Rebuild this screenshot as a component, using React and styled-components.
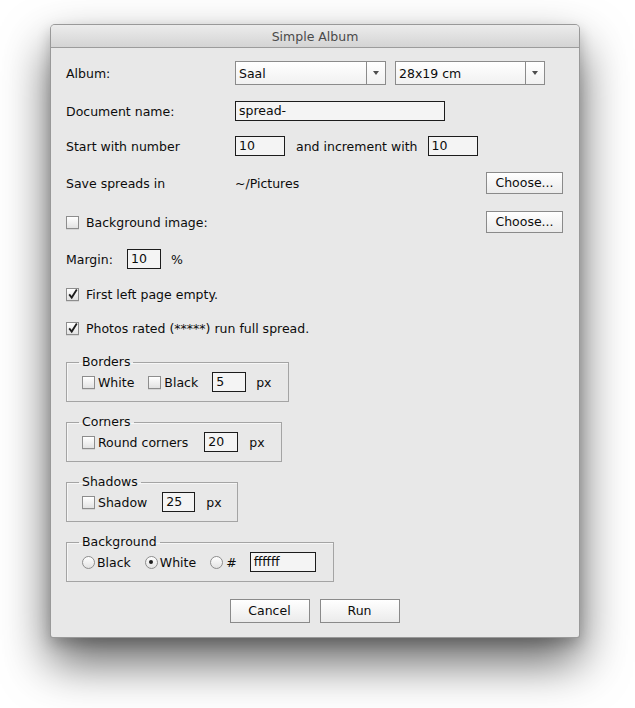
import React from "react";
import styled, { createGlobalStyle } from "styled-components";

const GlobalStyle = createGlobalStyle`
  html, body {
    margin: 0;
    padding: 0;
    background: #ffffff;
  }
  body {
    font-family: "DejaVu Sans", "Noto Sans", sans-serif;
    font-size: 12.5px;
    color: #0c0c0c;
  }
`;

const Desktop = styled.div`
  padding: 24px 55px 71px 50px;
`;

const Window = styled.div`
  width: 530px;
  height: 614px;
  box-sizing: border-box;
  display: flex;
  flex-direction: column;
  background: #e8e8e8;
  border: 1px solid rgba(0, 0, 0, 0.34);
  border-radius: 5px 5px 3px 3px;
  box-shadow: 0 24px 48px rgba(0, 0, 0, 0.62), 0 6px 14px rgba(0, 0, 0, 0.18);
  overflow: hidden;
`;

const TitleBar = styled.div`
  height: 22px;
  flex-shrink: 0;
  display: flex;
  align-items: center;
  justify-content: center;
  background: linear-gradient(#ececec, #d4d4d4);
  border-bottom: 1px solid #9c9c9c;
  color: #4a4a4a;
  font-size: 12.5px;
`;

const Body = styled.div`
  display: flex;
  flex-direction: column;
  padding: 0 16px 0 15px;
`;

const Row = styled.div`
  display: flex;
  align-items: center;
  height: ${(p) => p.$h}px;
  margin-top: ${(p) => p.$top}px;
  justify-content: ${(p) => (p.$center ? "center" : "flex-start")};
  gap: ${(p) => p.$gap || 0}px;
`;

const Label = styled.span`
  width: ${(p) => p.$w || 169}px;
  flex-shrink: 0;
  white-space: nowrap;
`;

const Text = styled.span`
  white-space: nowrap;
  margin-left: ${(p) => p.$ml || 0}px;
`;

const Select = styled.div`
  width: ${(p) => p.$w}px;
  height: 24px;
  box-sizing: border-box;
  display: flex;
  margin-right: ${(p) => p.$mr || 0}px;
  border: 1px solid #8b8b8b;
  background: linear-gradient(#ffffff, #f1f1f1);
`;

const SelectValue = styled.span`
  flex: 1;
  display: flex;
  align-items: center;
  padding-left: 3px;
  padding-top: 1px;
`;

const SelectArrow = styled.span`
  width: 18px;
  border-left: 1px solid #8b8b8b;
  display: flex;
  align-items: center;
  justify-content: center;
  &::after {
    content: "";
    border-left: 3.5px solid transparent;
    border-right: 3.5px solid transparent;
    border-top: 4px solid #4e4e4e;
  }
`;

const Field = styled.div`
  width: ${(p) => p.$w}px;
  height: 20px;
  box-sizing: border-box;
  flex-shrink: 0;
  display: flex;
  align-items: center;
  padding: 0 3px 1px;
  margin-left: ${(p) => p.$ml || 0}px;
  border: 1px solid #1c1c1c;
  background: #f4f4f4;
`;

const Button = styled.div`
  width: ${(p) => p.$w}px;
  height: ${(p) => p.$h || 22}px;
  box-sizing: border-box;
  display: flex;
  align-items: center;
  justify-content: center;
  margin-left: ${(p) => (p.$right ? "auto" : "0")};
  border: 1px solid #8a8a8a;
  background: linear-gradient(#ffffff, #ebebeb);
  padding-bottom: 1px;
`;

const Box = styled.span`
  width: 13px;
  height: 13px;
  box-sizing: border-box;
  flex-shrink: 0;
  display: inline-flex;
  border: 1px solid #8d8d8d;
  background: linear-gradient(#ffffff, #e2e2e2);
  box-shadow: 0 1px 0 rgba(0, 0, 0, 0.08);
  overflow: visible;
`;

const Round = styled.span`
  width: 13px;
  height: 13px;
  box-sizing: border-box;
  flex-shrink: 0;
  display: inline-flex;
  align-items: center;
  justify-content: center;
  border: 1px solid #8d8d8d;
  border-radius: 50%;
  background: linear-gradient(#ffffff, #e2e2e2);
  &::after {
    content: "";
    width: 4px;
    height: 4px;
    border-radius: 50%;
    background: ${(p) => (p.$on ? "#1e1e1e" : "transparent")};
  }
`;

const Choice = styled.label`
  display: inline-flex;
  align-items: center;
  gap: ${(p) => p.$gap || 3}px;
  margin-right: ${(p) => p.$mr || 0}px;
  white-space: nowrap;
`;

const Group = styled.fieldset`
  width: ${(p) => p.$w}px;
  box-sizing: border-box;
  min-width: 0;
  margin: ${(p) => p.$top}px 0 0 0;
  padding: 3px 12px 9px 15px;
  border: 1px solid #a4a4a4;
  box-shadow: inset 1px 1px 0 rgba(255, 255, 255, 0.6);
`;

const Legend = styled.legend`
  padding: 0 3px;
  margin-left: -3px;
  line-height: 14px;
`;

const GroupRow = styled.div`
  display: flex;
  align-items: center;
  height: 20px;
`;

const Check = ({ on }) => (
  <Box>
    {on && (
      <svg width="11" height="11" viewBox="0 0 11 11" style={{ overflow: "visible" }}>
        <path d="M2.2 5.4 L4.7 8.6 L9.8 0.4" fill="none" stroke="#1e1e1e" strokeWidth="1.8" />
      </svg>
    )}
  </Box>
);

export default function App() {
  return (
    <>
      <GlobalStyle />
      <Desktop>
        <Window>
          <TitleBar>Simple Album</TitleBar>
          <Body>
            <Row $h={24} $top={13}>
              <Label>Album:</Label>
              <Select $w={151} $mr={9}>
                <SelectValue>Saal</SelectValue>
                <SelectArrow />
              </Select>
              <Select $w={150}>
                <SelectValue>28x19 cm</SelectValue>
                <SelectArrow />
              </Select>
            </Row>

            <Row $h={20} $top={16}>
              <Label>Document name:</Label>
              <Field $w={210}>spread-</Field>
            </Row>

            <Row $h={20} $top={15}>
              <Label>Start with number</Label>
              <Field $w={50}>10</Field>
              <Text $ml={11}>and increment with</Text>
              <Field $w={50} $ml={10}>10</Field>
            </Row>

            <Row $h={22} $top={16}>
              <Label>Save spreads in</Label>
              <Text>~/Pictures</Text>
              <Button $w={77} $right>Choose...</Button>
            </Row>

            <Row $h={22} $top={17}>
              <Choice $gap={7}>
                <Check />
                Background image:
              </Choice>
              <Button $w={77} $right>Choose...</Button>
            </Row>

            <Row $h={20} $top={16}>
              <Label $w={61}>Margin:</Label>
              <Field $w={34}>10</Field>
              <Text $ml={10}>%</Text>
            </Row>

            <Row $h={20} $top={15}>
              <Choice $gap={7}>
                <Check on />
                First left page empty.
              </Choice>
            </Row>

            <Row $h={20} $top={14}>
              <Choice $gap={7}>
                <Check on />
                Photos rated (*****) run full spread.
              </Choice>
            </Row>

            <Group $w={223} $top={17}>
              <Legend>Borders</Legend>
              <GroupRow>
                <Choice $mr={14}>
                  <Check />
                  White
                </Choice>
                <Choice $mr={14}>
                  <Check />
                  Black
                </Choice>
                <Field $w={34}>5</Field>
                <Text $ml={10}>px</Text>
              </GroupRow>
            </Group>

            <Group $w={216} $top={13}>
              <Legend>Corners</Legend>
              <GroupRow>
                <Choice $mr={16}>
                  <Check />
                  Round corners
                </Choice>
                <Field $w={34}>20</Field>
                <Text $ml={11}>px</Text>
              </GroupRow>
            </Group>

            <Group $w={172} $top={13}>
              <Legend>Shadows</Legend>
              <GroupRow>
                <Choice $mr={15}>
                  <Check />
                  Shadow
                </Choice>
                <Field $w={33}>25</Field>
                <Text $ml={11}>px</Text>
              </GroupRow>
            </Group>

            <Group $w={268} $top={13}>
              <Legend>Background</Legend>
              <GroupRow>
                <Choice $gap={2} $mr={14}>
                  <Round />
                  Black
                </Choice>
                <Choice $gap={2} $mr={14}>
                  <Round $on />
                  White
                </Choice>
                <Choice $gap={3} $mr={13}>
                  <Round />
                  #
                </Choice>
                <Field $w={66}>ffffff</Field>
              </GroupRow>
            </Group>

            <Row $h={24} $top={17} $center $gap={10}>
              <Button $w={80} $h={24}>Cancel</Button>
              <Button $w={80} $h={24}>Run</Button>
            </Row>
          </Body>
        </Window>
      </Desktop>
    </>
  );
}
